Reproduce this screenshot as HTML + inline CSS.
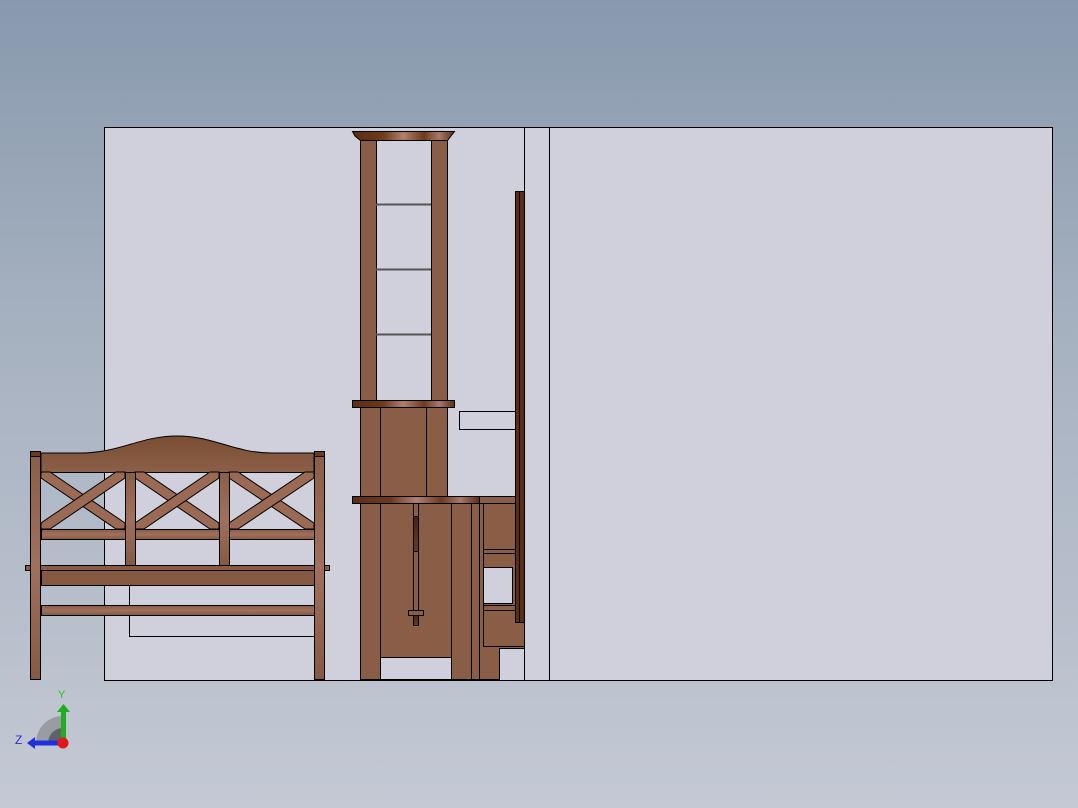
<!DOCTYPE html>
<html><head><meta charset="utf-8"><style>
html,body{margin:0;padding:0;width:1078px;height:808px;overflow:hidden}
body{background:linear-gradient(#8899ad 0%,#a6b1c0 40%,#c4c9d4 100%)}
svg{position:absolute;left:0;top:0}
</style></head><body>
<svg width="1078" height="808" viewBox="0 0 1078 808">
<defs>
<linearGradient id="w" x1="0" y1="0" x2="0" y2="1"><stop offset="0" stop-color="#7a4e34"/><stop offset="1" stop-color="#8c6048"/></linearGradient>
<linearGradient id="p" x1="0" y1="0" x2="0" y2="1"><stop offset="0" stop-color="#8a5e46"/><stop offset=".5" stop-color="#a0705c"/><stop offset="1" stop-color="#865a42"/></linearGradient>
<linearGradient id="sh" x1="0" y1="0" x2="1" y2="0"><stop offset="0" stop-color="#5a2e14"/><stop offset=".3" stop-color="#6e3a1c"/><stop offset=".5" stop-color="#b08070"/><stop offset=".7" stop-color="#6e3a1c"/><stop offset=".85" stop-color="#a87868"/><stop offset="1" stop-color="#5a2e14"/></linearGradient>
<linearGradient id="dk" x1="0" y1="0" x2="0" y2="1"><stop offset="0" stop-color="#4a2410"/><stop offset="1" stop-color="#6a3a20"/></linearGradient>
</defs>
<g stroke="#000" stroke-width="1">
<rect x="104.5" y="127.5" width="420" height="553" fill="#d0d0dd"/>
<rect x="524.5" y="127.5" width="25" height="553" fill="#d0d0dd"/>
<rect x="549.5" y="127.5" width="503" height="553" fill="#d0d0dd"/>
</g>
<!-- cabinet -->
<g stroke="#000" stroke-width="1" fill="#8a5e46">
<rect x="459.5" y="411.5" width="56" height="18" fill="none"/>
<rect x="360.5" y="140.5" width="16" height="260"/>
<rect x="431.5" y="140.5" width="16" height="260"/>
<line x1="376" y1="204.5" x2="431" y2="204.5" stroke="#555" stroke-width="2"/>
<line x1="376" y1="269.5" x2="431" y2="269.5" stroke="#555" stroke-width="2"/>
<line x1="376" y1="334.5" x2="431" y2="334.5" stroke="#555" stroke-width="2"/>
<path d="M352.5 131.5 H454.5 L451 136 L447.5 140.5 H360.5 L355 136 Z" fill="url(#sh)"/>
<rect x="360.5" y="407.5" width="87" height="89"/>
<line x1="380.5" y1="407" x2="380.5" y2="496"/>
<line x1="426.5" y1="407" x2="426.5" y2="496"/>
<rect x="352.5" y="400.5" width="102" height="7" fill="url(#sh)"/>
<rect x="360.5" y="503.5" width="164" height="176"/>
<rect x="380.5" y="503.5" width="71" height="154"/>
<rect x="380.5" y="657.5" width="71" height="22" fill="#d0d0dd"/>
<line x1="471.5" y1="503" x2="471.5" y2="680"/>
<line x1="479.5" y1="496" x2="479.5" y2="680"/>
<rect x="483.5" y="503.5" width="41" height="143" fill="none"/>
<line x1="483" y1="549.5" x2="515" y2="549.5"/>
<line x1="483" y1="553.5" x2="515" y2="553.5"/>
<rect x="483.5" y="567.5" width="29" height="36" fill="#d0d0dd"/>
<line x1="483" y1="605.5" x2="515" y2="605.5"/>
<line x1="483" y1="610.5" x2="515" y2="610.5"/>
<rect x="499.5" y="648.5" width="25" height="32" fill="#d0d0dd"/>
<rect x="479.5" y="496.5" width="45" height="7"/>
<rect x="352.5" y="496.5" width="127" height="7" fill="url(#sh)"/>
<rect x="413.5" y="503.5" width="5" height="122"/>
<rect x="413.5" y="516.5" width="5" height="35" fill="url(#dk)"/>
<rect x="413.5" y="615.5" width="5" height="10" fill="url(#dk)"/>
<rect x="408.5" y="610.5" width="15" height="5"/>
<rect x="515.5" y="191.5" width="9" height="431" fill="#5a2e14"/>
<line x1="519.5" y1="192" x2="519.5" y2="622"/>
</g>
<!-- bench -->
<g stroke="#000" stroke-width="1">
<rect x="129.5" y="585.5" width="185" height="51" fill="none"/>
<rect x="129.5" y="483.5" width="185" height="0" fill="none"/>
<path d="M80 453 C120 453 140 436 177 436 C214 436 234 453 272 453 L314 453 V472.5 H41 V453 Z" fill="url(#w)"/>
<g fill="#9a6a54">
<path d="M41 472 L50 472 L125 523 L125 529 L116 529 L41 478 Z"/>
<path d="M125 472 L116 472 L41 523 L41 529 L50 529 L125 478 Z"/>
<path d="M135 472 L144 472 L219 523 L219 529 L210 529 L135 478 Z"/>
<path d="M219 472 L210 472 L135 523 L135 529 L144 529 L219 478 Z"/>
<path d="M229 472 L238 472 L314 523 L314 529 L305 529 L229 478 Z"/>
<path d="M314 472 L305 472 L229 523 L229 529 L238 529 L314 478 Z"/>
</g>
<g fill="url(#p)">
<rect x="41.5" y="529.5" width="273" height="10"/>
<rect x="125.5" y="472.5" width="10" height="93"/>
<rect x="219.5" y="472.5" width="10" height="93"/>
<rect x="41.5" y="605.5" width="273" height="10"/>
</g>
<rect x="41.5" y="570.5" width="273" height="15" fill="#865a42"/>
<rect x="25.5" y="565.5" width="304" height="5" fill="#8a5a42"/>
<rect x="30.5" y="451.5" width="10" height="228" fill="url(#p)"/>
<rect x="314.5" y="451.5" width="10" height="228" fill="url(#p)"/>
<rect x="30.5" y="451.5" width="10" height="5" fill="#6a3a20"/>
<rect x="314.5" y="451.5" width="10" height="5" fill="#6a3a20"/>
</g>
<!-- triad -->
<path d="M36 743 A27 27 0 0 1 63 716 V743 Z" fill="#9a9ca4"/>
<path d="M48 743 A15 15 0 0 1 63 728 V743 Z" fill="#606268"/>
<rect x="61" y="710" width="5" height="30" fill="#1fae1f"/>
<path d="M57 712 L63.5 704 L70 712 Z" fill="#1fae1f"/>
<rect x="34" y="740.5" width="28" height="5" fill="#2030e0"/>
<path d="M35 737 L27 743 L35 749 Z" fill="#2030e0"/>
<circle cx="63" cy="743" r="5.5" fill="#e01818"/>
<text x="58" y="698" font-family="Liberation Sans,sans-serif" font-size="11" fill="#1fcc1f">Y</text>
<text x="15" y="744" font-family="Liberation Sans,sans-serif" font-size="12" fill="#2030e0">Z</text>
</svg>
</body></html>
